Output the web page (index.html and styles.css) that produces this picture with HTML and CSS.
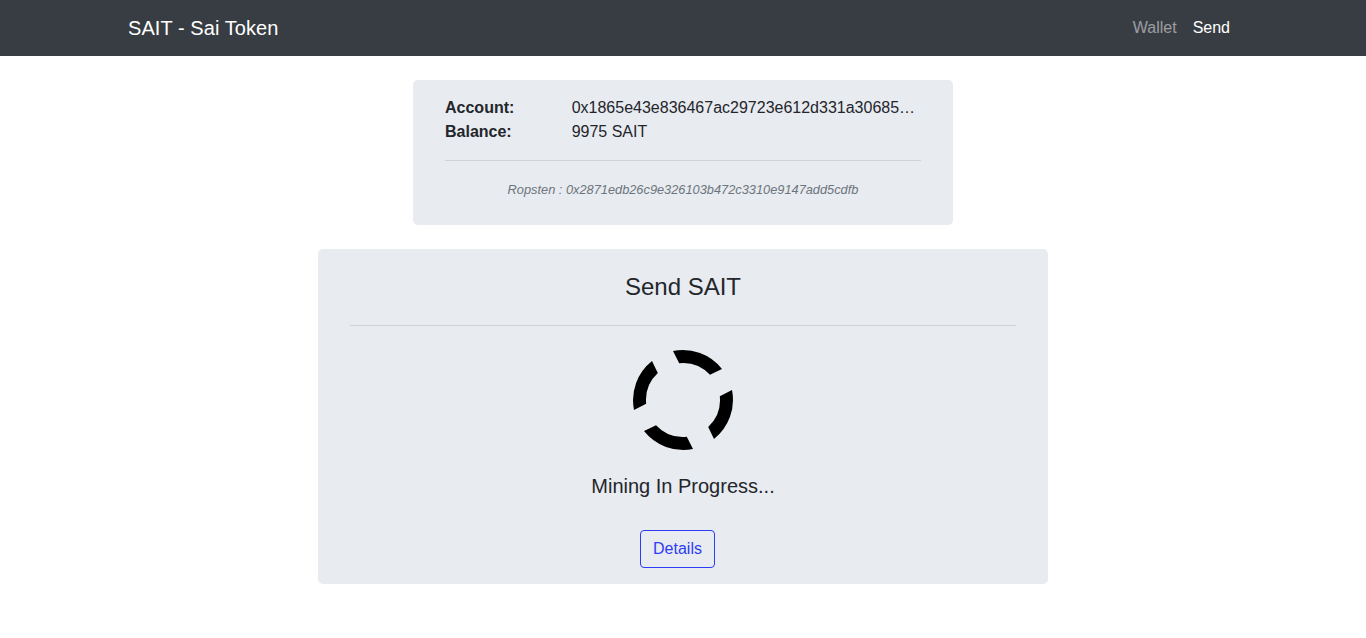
FILE: index.html
```html
<!DOCTYPE html>
<html lang="en">
<head>
<meta charset="utf-8">
<title>SAIT - Sai Token</title>
<link rel="stylesheet" href="styles.css">
</head>
<body>
<nav class="navbar">
  <div class="nav-inner">
    <a class="brand" href="#">SAIT - Sai Token</a>
    <div class="nav-links">
      <a class="nav-link" href="#">Wallet</a>
      <a class="nav-link active" href="#">Send</a>
    </div>
  </div>
</nav>
<main class="page">
  <section class="card card-account">
    <div class="info-row">
      <strong>Account:</strong>
      <span class="truncate">0x1865e43e836467ac29723e612d331a30685f3a9c0d12</span>
    </div>
    <div class="info-row">
      <strong>Balance:</strong>
      <span>9975 SAIT</span>
    </div>
    <hr class="rule rule-account">
    <p class="network">Ropsten : 0x2871edb26c9e326103b472c3310e9147add5cdfb</p>
  </section>
  <section class="card card-send">
    <h1 class="title">Send SAIT</h1>
    <hr class="rule rule-send">
    <svg class="spinner" viewBox="0 0 100 100" width="100" height="100" aria-hidden="true">
      <path d="M40 1A50 50 0 0 1 89 19L77 24.8A37 37 0 0 0 46.2 13.2Z"/>
      <path d="M99 40A50 50 0 0 1 81 89L75.2 77A37 37 0 0 0 86.8 46.2Z"/>
      <path d="M60 99A50 50 0 0 1 11 81L23 75.2A37 37 0 0 0 53.8 86.8Z"/>
      <path d="M1 60A50 50 0 0 1 19 11L24.8 23A37 37 0 0 0 13.2 53.8Z"/>
    </svg>
    <p class="status">Mining In Progress...</p>
    <div class="actions"><a class="btn" href="#">Details</a></div>
  </section>
</main>
</body>
</html>
```
FILE: styles.css
```css
* {
  box-sizing: border-box;
}

body {
  margin: 0;
  background: #fff;
  color: #23262b;
  font-family: "Liberation Sans", Arial, sans-serif;
  font-size: 16px;
  line-height: 24px;
}

a {
  text-decoration: none;
}

.navbar {
  height: 56px;
  background: #383d44;
}

.nav-inner {
  width: 1140px;
  height: 100%;
  margin: 0 auto;
  padding: 0 15px;
  display: flex;
  align-items: center;
  justify-content: space-between;
}

.brand {
  color: #fff;
  font-size: 20px;
  line-height: 30px;
  letter-spacing: 0.07px;
}

.nav-links {
  display: flex;
}

.nav-link {
  padding: 8px;
  color: rgba(255, 255, 255, 0.5);
}

.nav-link.active {
  color: #fff;
}

.page {
  display: flex;
  flex-direction: column;
  align-items: center;
  padding-top: 24px;
  gap: 24px;
}

.card {
  background: #e8ebf0;
  border-radius: 4.8px;
}

.card-account {
  width: 540px;
  height: 145px;
  padding: 16px 32px;
}

.info-row {
  display: grid;
  grid-template-columns: 126.67px 346px;
}

.truncate {
  overflow: hidden;
  white-space: nowrap;
  text-overflow: ellipsis;
}

.rule {
  border: 0;
  border-top: 1px solid rgba(0, 0, 0, 0.1);
  margin: 0;
}

.rule-account {
  margin-top: 16px;
}

.network {
  margin: 17px 0 0;
  color: #6c757d;
  font-size: 12.8px;
  font-style: italic;
  line-height: 24px;
  text-align: center;
}

.card-send {
  width: 730px;
  height: 335px;
  padding: 20px 32px 0;
  display: flex;
  flex-direction: column;
  align-items: center;
}

.title {
  margin: 0;
  font-size: 24px;
  font-weight: 400;
  line-height: 36px;
}

.rule-send {
  width: 100%;
  margin-top: 20px;
}

.spinner {
  display: block;
  margin-top: 24px;
  fill: #000;
}

.status {
  margin: 21px 0 0;
  font-size: 20px;
  line-height: 30px;
}

.actions {
  margin-top: 29px;
  padding-right: 11px;
}

.btn {
  display: inline-block;
  padding: 6px 12px;
  border: 1px solid #2d3cf5;
  border-radius: 4px;
  color: #2d3cf5;
}
```
